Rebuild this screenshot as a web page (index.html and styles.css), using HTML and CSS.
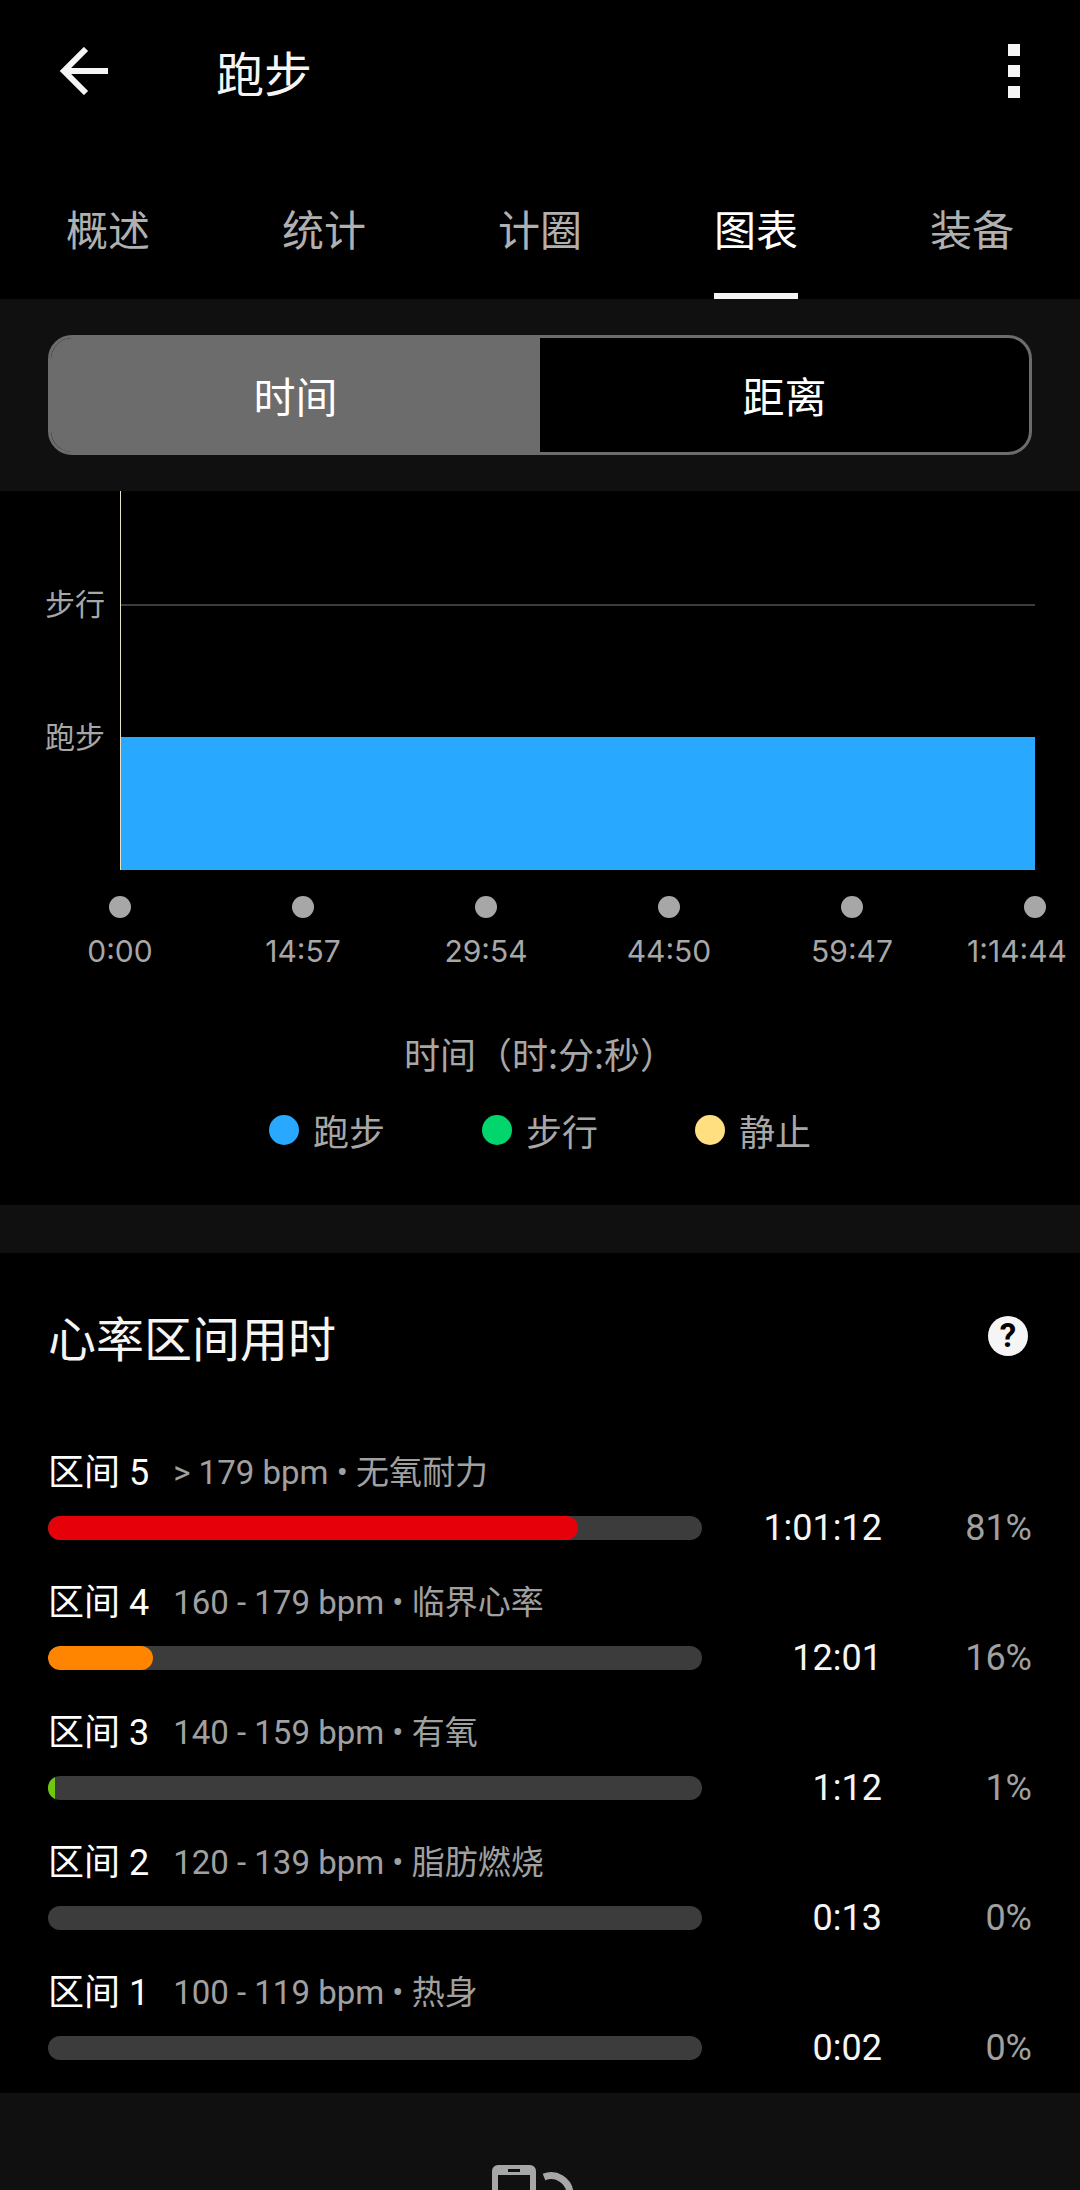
FILE: index.html
```html
<!DOCTYPE html>
<html lang="zh-CN">
<head>
<meta charset="utf-8">
<meta name="viewport" content="width=device-width, initial-scale=1">
<title>跑步</title>
<link rel="stylesheet" href="styles.css">
</head>
<body>
<header class="topbar">
  <button class="icon-button" type="button" aria-label="返回">
    <svg width="48" height="48" viewBox="0 0 48 48" fill="none" stroke="currentColor" stroke-width="6" aria-hidden="true">
      <path d="M26 2 4 24l22 22M4 24h44"/>
    </svg>
  </button>
  <h1 class="topbar-title">跑步</h1>
  <button class="icon-button" type="button" aria-label="更多">
    <svg width="12" height="54" viewBox="0 0 12 54" fill="currentColor" aria-hidden="true">
      <path d="M0 0h12v12H0zM0 21h12v12H0zM0 42h12v12H0z"/>
    </svg>
  </button>
</header>

<nav class="tabs">
  <a class="tab" href="#overview">概述</a>
  <a class="tab" href="#stats">统计</a>
  <a class="tab" href="#laps">计圈</a>
  <a class="tab tab-active" href="#charts" aria-current="page">图表</a>
  <a class="tab" href="#gear">装备</a>
</nav>

<main>
  <div class="switch-bar">
    <div class="switch">
      <button class="switch-option switch-on" type="button" aria-pressed="true">时间</button>
      <button class="switch-option" type="button" aria-pressed="false">距离</button>
    </div>
  </div>

  <section class="chart" id="charts">
    <div class="chart-body">
      <div class="y-labels">
        <span>步行</span>
        <span>跑步</span>
      </div>
      <div class="plot">
        <div class="band band-top"></div>
        <div class="band band-walk"></div>
        <div class="band band-run"></div>
      </div>
    </div>
    <ol class="ticks">
      <li class="tick"><span class="tick-label">0:00</span></li>
      <li class="tick"><span class="tick-label">14:57</span></li>
      <li class="tick"><span class="tick-label">29:54</span></li>
      <li class="tick"><span class="tick-label">44:50</span></li>
      <li class="tick"><span class="tick-label">59:47</span></li>
      <li class="tick"><span class="tick-label tick-label-last">1:14:44</span></li>
    </ol>
    <p class="axis-title">时间（时:分:秒）</p>
    <ul class="legend">
      <li class="legend-item legend-run">跑步</li>
      <li class="legend-item legend-walk">步行</li>
      <li class="legend-item legend-idle">静止</li>
    </ul>
  </section>

  <section class="zones">
    <div class="zones-header">
      <h2 class="zones-title">心率区间用时</h2>
      <button class="help" type="button" aria-label="帮助"><span class="help-mark">?</span></button>
    </div>
    <ul class="zone-list">
      <li class="zone">
        <p class="zone-head"><span class="zone-name">区间 5</span><span class="zone-range">&gt; 179 bpm • 无氧耐力</span></p>
        <div class="zone-data">
          <div class="bar"><div class="fill fill-5" style="width: 81%"></div></div>
          <span class="zone-time">1:01:12</span><span class="zone-share">81%</span>
        </div>
      </li>
      <li class="zone">
        <p class="zone-head"><span class="zone-name">区间 4</span><span class="zone-range">160 - 179 bpm • 临界心率</span></p>
        <div class="zone-data">
          <div class="bar"><div class="fill fill-4" style="width: 16%"></div></div>
          <span class="zone-time">12:01</span><span class="zone-share">16%</span>
        </div>
      </li>
      <li class="zone">
        <p class="zone-head"><span class="zone-name">区间 3</span><span class="zone-range">140 - 159 bpm • 有氧</span></p>
        <div class="zone-data">
          <div class="bar"><div class="fill fill-3" style="width: 1%"></div></div>
          <span class="zone-time">1:12</span><span class="zone-share">1%</span>
        </div>
      </li>
      <li class="zone">
        <p class="zone-head"><span class="zone-name">区间 2</span><span class="zone-range">120 - 139 bpm • 脂肪燃烧</span></p>
        <div class="zone-data">
          <div class="bar"></div>
          <span class="zone-time">0:13</span><span class="zone-share">0%</span>
        </div>
      </li>
      <li class="zone">
        <p class="zone-head"><span class="zone-name">区间 1</span><span class="zone-range">100 - 119 bpm • 热身</span></p>
        <div class="zone-data">
          <div class="bar"></div>
          <span class="zone-time">0:02</span><span class="zone-share">0%</span>
        </div>
      </li>
    </ul>
  </section>
</main>

<footer class="rotate-hint">
  <svg width="96" height="25" viewBox="0 0 96 25" aria-hidden="true">
    <path fill="#a7a7a7" fill-rule="evenodd" d="M0 25V6a6 6 0 0 1 6-6h32a6 6 0 0 1 6 6v19h-6V10H6v15zM16 4v3h12V4z"/>
    <path fill="none" stroke="#a7a7a7" stroke-width="7" d="M52 12A19 19 0 0 1 78 28"/>
  </svg>
</footer>
</body>
</html>
```
FILE: styles.css
```css
* {
  box-sizing: border-box;
}

body {
  margin: 0;
  background: #000;
  color: #f5f5f5;
  font-family: Roboto, "Noto Sans CJK SC", sans-serif;
  font-size: 36px;
  line-height: 48px;
}

h1, h2, p, ul, ol {
  margin: 0;
  padding: 0;
  font-weight: 400;
  list-style: none;
}

button {
  margin: 0;
  padding: 0;
  border: 0;
  background: none;
  color: inherit;
  font: inherit;
}

svg {
  display: block;
}

.topbar-title,
.tab,
.switch-option,
.axis-title,
.legend,
.zones-title {
  font-family: "Noto Sans CJK SC", sans-serif;
}

/* Top bar and tabs */
.topbar {
  display: flex;
  align-items: center;
  height: 142px;
  padding: 0 60px;
}

.topbar-title {
  flex: 1;
  margin-left: 108px;
  font-size: 48px;
  line-height: 72px;
}

.tabs {
  display: grid;
  grid-template-columns: repeat(5, 1fr);
  justify-items: center;
  padding-top: 56px;
}

.tab {
  padding-bottom: 35px;
  border-bottom: 6px solid transparent;
  color: #b0b0b0;
  font-size: 42px;
  line-height: 60px;
  text-decoration: none;
}

.tab-active {
  border-color: #f5f5f5;
  color: #fff;
}

/* Time / distance switch */
.switch-bar {
  padding: 36px 48px;
  background: #101010;
}

.switch {
  display: grid;
  grid-template-columns: 1fr 1fr;
  height: 120px;
  overflow: hidden;
  border: 3px solid #6c6c6c;
  border-radius: 24px;
  background: #000;
}

.switch-option {
  color: #fff;
  font-size: 42px;
  line-height: 60px;
}

.switch-on {
  background: #6c6c6c;
}

/* Run / walk chart */
.chart {
  padding-bottom: 51px;
}

.chart-body {
  display: grid;
  grid-template-columns: 120px 1fr;
  padding-right: 45px;
}

.y-labels {
  display: flex;
  flex-direction: column;
  align-items: flex-end;
  gap: 93px;
  padding: 94px 15px 0 0;
  color: #a7a7a7;
  font-size: 30px;
  line-height: 40px;
}

.plot {
  border-left: 1px solid #e6e2c8;
}

.band {
  height: 133px;
}

.band-top {
  height: 113px;
}

.band-walk {
  border-top: 2px solid #3c3c3c;
}

.band-run {
  background: #29a8ff;
}

.ticks {
  display: flex;
  justify-content: space-between;
  padding: 26px 45px 0 120px;
}

.tick {
  display: flex;
  flex-direction: column;
  align-items: center;
  gap: 15px;
  width: 0;
  color: #a7a7a7;
  font-family: Inter, sans-serif;
  font-size: 30px;
  line-height: 36px;
  white-space: nowrap;
}

.tick::before {
  content: "";
  width: 22px;
  height: 22px;
  border-radius: 50%;
  background: #a7a7a7;
}

/* Keeps the long final label inside the screen edge */
.tick-label-last {
  padding-right: 36px;
}

.axis-title {
  margin-top: 58px;
  color: #a7a7a7;
  line-height: 52px;
  text-align: center;
}

.legend {
  display: flex;
  justify-content: center;
  gap: 97px;
  margin-top: 27px;
  color: #a7a7a7;
}

.legend-item {
  display: flex;
  align-items: center;
  gap: 14px;
}

.legend-item::before {
  content: "";
  width: 30px;
  height: 30px;
  border-radius: 50%;
}

.legend-run::before {
  background: #29a8ff;
}

.legend-walk::before {
  background: #00d66b;
}

.legend-idle::before {
  background: #ffdf80;
}

/* Heart rate zones */
.zones {
  padding: 47px 48px 24px;
  border-top: 48px solid #101010;
}

.zones-header {
  display: flex;
  align-items: center;
  justify-content: space-between;
}

.zones-title {
  font-size: 48px;
  line-height: 72px;
}

.help {
  padding: 4px;
}

.help-mark {
  display: block;
  width: 40px;
  height: 40px;
  border-radius: 50%;
  background: #f5f5f5;
  color: #000;
  font-size: 33px;
  font-weight: 700;
  line-height: 40px;
  text-align: center;
}

.zone-list {
  display: grid;
  gap: 32px;
  margin-top: 79px;
}

.zone {
  display: grid;
  gap: 12px;
}

.zone-head {
  display: flex;
  align-items: center;
  gap: 24px;
  line-height: 44px;
}

.zone-name {
  color: #fff;
}

.zone-range {
  color: #a0a0a0;
  font-size: 33px;
}

.zone-data {
  display: grid;
  grid-template-columns: 1fr 180px 150px;
  align-items: center;
  line-height: 42px;
  text-align: right;
}

.zone-share {
  color: #a0a0a0;
}

.bar {
  height: 24px;
  overflow: hidden;
  border-radius: 12px;
  background: #3c3c3c;
}

.fill {
  height: 100%;
  border-radius: 12px;
}

.fill-5 {
  background: #e60009;
}

.fill-4 {
  background: #ff8400;
}

.fill-3 {
  border-radius: 0;
  background: #6fc80e;
}

/* Rotate-device hint, only its top edge is in view */
.rotate-hint {
  display: flex;
  justify-content: center;
  padding-top: 72px;
  background: #101010;
}
```
